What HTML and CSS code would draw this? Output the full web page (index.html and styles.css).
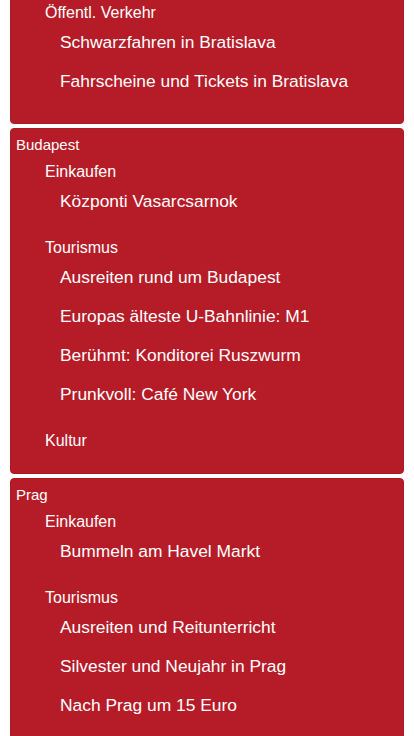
FILE: index.html
```html
<!DOCTYPE html>
<html lang="de">
<head>
<meta charset="utf-8">
<meta name="viewport" content="width=device-width, initial-scale=1">
<title>Reiseziele</title>
<link rel="stylesheet" href="styles.css">
</head>
<body>
<div class="cards">
  <section class="card card-first">
    <ul class="cats">
      <li class="cat">
        <span class="cat-title">Öffentl. Verkehr</span>
        <ul class="items">
          <li class="item">Schwarzfahren in Bratislava</li>
          <li class="item">Fahrscheine und Tickets in Bratislava</li>
        </ul>
      </li>
    </ul>
  </section>
  <section class="card">
    <h2 class="city">Budapest</h2>
    <ul class="cats">
      <li class="cat">
        <span class="cat-title">Einkaufen</span>
        <ul class="items">
          <li class="item">Központi Vasarcsarnok</li>
        </ul>
      </li>
      <li class="cat">
        <span class="cat-title">Tourismus</span>
        <ul class="items">
          <li class="item">Ausreiten rund um Budapest</li>
          <li class="item">Europas älteste U-Bahnlinie: M1</li>
          <li class="item">Berühmt: Konditorei Ruszwurm</li>
          <li class="item">Prunkvoll: Café New York</li>
        </ul>
      </li>
      <li class="cat">
        <span class="cat-title">Kultur</span>
      </li>
    </ul>
  </section>
  <section class="card">
    <h2 class="city">Prag</h2>
    <ul class="cats">
      <li class="cat">
        <span class="cat-title">Einkaufen</span>
        <ul class="items">
          <li class="item">Bummeln am Havel Markt</li>
        </ul>
      </li>
      <li class="cat">
        <span class="cat-title">Tourismus</span>
        <ul class="items">
          <li class="item">Ausreiten und Reitunterricht</li>
          <li class="item">Silvester und Neujahr in Prag</li>
          <li class="item">Nach Prag um 15 Euro</li>
        </ul>
      </li>
    </ul>
  </section>
</div>
</body>
</html>
```

FILE: styles.css
```css
html, body {
  margin: 0;
  padding: 0;
  background: #ffffff;
}

body {
  font-family: "Liberation Sans", Arial, sans-serif;
  color: #ffffff;
  overflow: hidden;
}

.cards {
  padding: 0 10px;
}

.card {
  background: #b51c28;
  border: 1px solid #a91a25;
  border-radius: 4px;
  margin: 0 0 4px 0;
  padding: 6px 0 5px 5px;
}

.card-first {
  margin-top: -4px;
  border-top-left-radius: 0;
  border-top-right-radius: 0;
}

.city {
  margin: 0 0 7px 0;
  font-size: 15px;
  line-height: 20px;
  font-weight: normal;
}

.cats {
  list-style: none;
  margin: 0;
  padding: 0 0 0 29px;
}

.cat {
  margin: 0 0 17px 0;
}

.cat-title {
  display: block;
  font-size: 16px;
  line-height: 20px;
}

.items {
  list-style: none;
  margin: 0;
  padding: 0 0 0 15px;
}

.item {
  font-size: 17.4px;
  line-height: 21px;
  padding: 9px 0;
}
```
